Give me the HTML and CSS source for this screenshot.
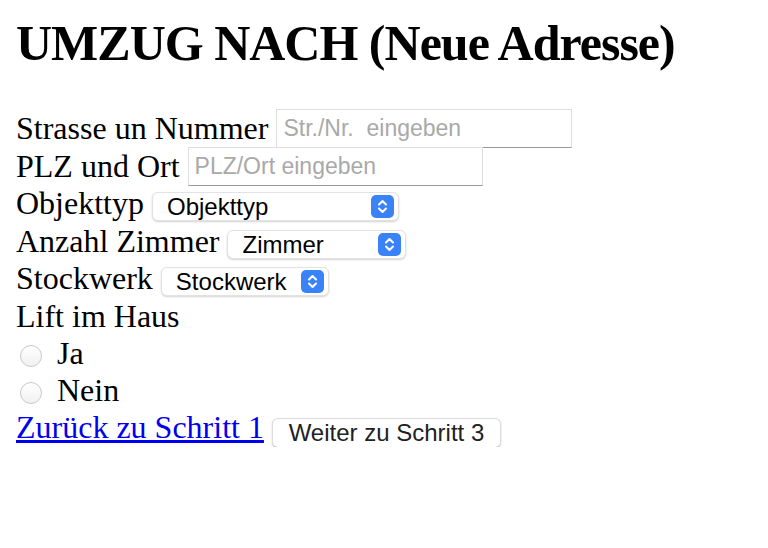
FILE: index.html
```html
<!DOCTYPE html>
<html lang="de">

<head>
    <meta charset="UTF-8">
    <meta name="viewport" content="width=device-width, initial-scale=1.0">
    <title>Umzug nach</title>
    <link rel="stylesheet" href="styles.css">
</head>

<body>

    <h1>UMZUG NACH (Neue Adresse)</h1>

    <form class="step" onsubmit="return false">
        <div class="row tall">
            <label for="strasse">Strasse un Nummer</label>
            <input type="text" id="strasse" class="text-field street" placeholder="Str./Nr.  eingeben">
        </div>
        <div class="row tall">
            <label for="ort">PLZ und Ort</label>
            <input type="text" id="ort" class="text-field" placeholder="PLZ/Ort eingeben">
        </div>
        <div class="row">
            <label for="objekttyp">Objekttyp</label>
            <span class="select-wrap">
                <select id="objekttyp" class="picker picker-type">
                    <option>Objekttyp</option>
                    <option>Wohnung</option>
                    <option>Haus</option>
                </select>
                <svg class="stepper" viewBox="0 0 23 23" width="23" height="23">
                    <rect width="23" height="23" rx="5" fill="#3a82f7" />
                    <path d="M8 9.5 L11.5 6 L15 9.5 M8 13.5 L11.5 17 L15 13.5" stroke="#fff" stroke-width="2"
                        fill="none" stroke-linecap="round" stroke-linejoin="round" />
                </svg>
            </span>
        </div>
        <div class="row">
            <label for="zimmer">Anzahl Zimmer</label>
            <span class="select-wrap">
                <select id="zimmer" class="picker picker-rooms">
                    <option>Zimmer</option>
                    <option>1</option>
                    <option>2</option>
                    <option>3</option>
                </select>
                <svg class="stepper" viewBox="0 0 23 23" width="23" height="23">
                    <rect width="23" height="23" rx="5" fill="#3a82f7" />
                    <path d="M8 9.5 L11.5 6 L15 9.5 M8 13.5 L11.5 17 L15 13.5" stroke="#fff" stroke-width="2"
                        fill="none" stroke-linecap="round" stroke-linejoin="round" />
                </svg>
            </span>
        </div>
        <div class="row">
            <label for="stockwerk">Stockwerk</label>
            <span class="select-wrap">
                <select id="stockwerk" class="picker picker-floor">
                    <option>Stockwerk</option>
                    <option>EG</option>
                    <option>1. OG</option>
                </select>
                <svg class="stepper" viewBox="0 0 23 23" width="23" height="23">
                    <rect width="23" height="23" rx="5" fill="#3a82f7" />
                    <path d="M8 9.5 L11.5 6 L15 9.5 M8 13.5 L11.5 17 L15 13.5" stroke="#fff" stroke-width="2"
                        fill="none" stroke-linecap="round" stroke-linejoin="round" />
                </svg>
            </span>
        </div>
        <div class="row">Lift im Haus</div>
        <div class="row radio-row">
            <input type="radio" id="lift-ja" name="lift" class="radio">
            <label for="lift-ja">Ja</label>
        </div>
        <div class="row radio-row">
            <input type="radio" id="lift-nein" name="lift" class="radio">
            <label for="lift-nein">Nein</label>
        </div>
        <div class="row">
            <a href="#">Zurück zu Schritt 1</a>
            <button type="button" class="button">Weiter zu Schritt 3</button>
        </div>
    </form>

</body>

</html>
```

FILE: styles.css
```css
body {
    margin: 16px;
    font-family: 'Liberation Serif', 'Times New Roman', serif;
    font-size: 32px;
    color: black;
    background: white;
}

h1 {
    font-size: 50px;
    font-weight: bold;
    letter-spacing: -1px;
    margin: 0 0 38px 0;
    line-height: 55px;
}

.row {
    height: 37.6px;
    line-height: 37px;
    white-space: nowrap;
}

.row.tall {
    height: 38px;
}

.text-field {
    box-sizing: border-box;
    height: 39px;
    width: 295px;
    padding: 0 6px;
    border: 1px solid #dedede;
    border-bottom-color: #9a9a9a;
    border-radius: 0;
    font-family: 'Liberation Sans', Arial, sans-serif;
    font-size: 23px;
    color: black;
    vertical-align: 3px;
    outline: none;
}

.text-field.street {
    width: 296px;
}

.text-field::placeholder {
    color: #a9a9a9;
}

.select-wrap {
    position: relative;
    display: inline-block;
    vertical-align: -1px;
}

.picker {
    -webkit-appearance: none;
    appearance: none;
    display: block;
    box-sizing: border-box;
    height: 29px;
    padding: 0 0 0 14px;
    border: 1px solid #e2e2e2;
    border-radius: 6px;
    background: white;
    box-shadow: 0 1px 2px rgba(0, 0, 0, 0.18);
    font-family: 'Liberation Sans', Arial, sans-serif;
    font-size: 24px;
    color: black;
    outline: none;
}

.picker-type {
    width: 247px;
}

.picker-rooms {
    width: 179px;
}

.picker-floor {
    width: 168px;
}

.stepper {
    position: absolute;
    right: 5px;
    top: 3px;
    pointer-events: none;
}

.radio-row {
    height: 37px;
}

.radio {
    -webkit-appearance: none;
    appearance: none;
    box-sizing: border-box;
    width: 22px;
    height: 22px;
    margin: 0 7px 0 4px;
    border: 1px solid #c9c9c9;
    border-radius: 50%;
    background: linear-gradient(#ffffff, #f1f1f1);
    vertical-align: -3px;
}

.radio:checked {
    border: 7px solid #3a82f7;
    background: white;
}

a {
    color: #0000ee;
    text-decoration: underline;
}

.button {
    box-sizing: border-box;
    height: 30px;
    width: 229px;
    padding: 0;
    margin-left: 0;
    border: 1px solid #dcdcdc;
    border-bottom-color: #c4c4c4;
    border-radius: 6px;
    background: white;
    box-shadow: 0 1px 2px rgba(0, 0, 0, 0.2);
    font-family: 'Liberation Sans', Arial, sans-serif;
    font-size: 24px;
    color: #222;
    cursor: pointer;
    vertical-align: -3px;
}
```
